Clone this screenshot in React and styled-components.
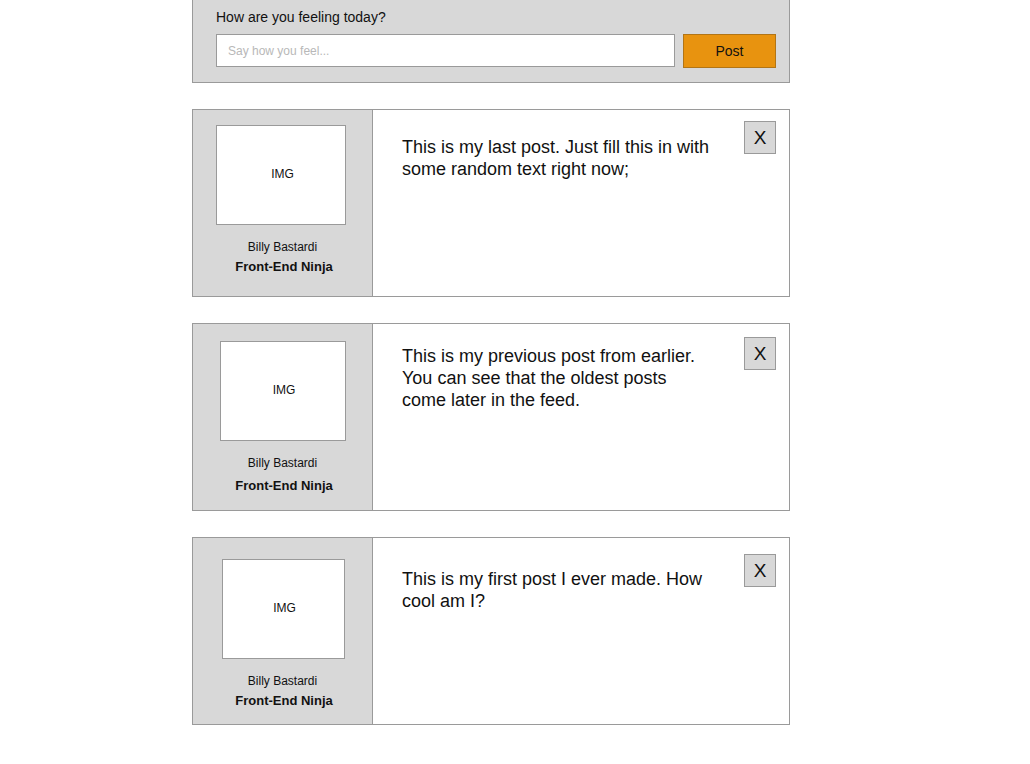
import React from 'react';
import styled, { createGlobalStyle } from 'styled-components';

const GlobalStyle = createGlobalStyle`
    body {
        margin: 0;
        background: #fff;
        font-family: "Liberation Sans", Arial, sans-serif;
        color: #111;
    }
`

const Page = styled.div`
    width: 598px;
    margin-left: 192px;
    display: flex;
    flex-direction: column;
    gap: 26px;
    padding-bottom: 40px;
`
const Composer = styled.div`
    background: #d8d8d8;
    border: 1px solid #9a9a9a;
    border-top: none;
    padding: 9px 13px 14px 23px;
`
const Prompt = styled.div`
    font-size: 14px;
    line-height: 16px;
    margin-bottom: 9px;
`
const ComposerRow = styled.div`
    display: flex;
    gap: 8px;
`
const Input = styled.input`
    flex: 1;
    height: 33px;
    box-sizing: border-box;
    border: 1px solid #9a9a9a;
    padding: 0 11px;
    font-family: inherit;
    font-size: 12px;
    outline: none;
    &::placeholder {
        color: #b8b8b8;
    }
`
const PostButton = styled.button`
    width: 93px;
    height: 34px;
    background: #e8930f;
    border: 1px solid #b27516;
    font-family: inherit;
    font-size: 14px;
    color: #111;
    padding: 0;
`
const Card = styled.div`
    display: flex;
    height: 188px;
    box-sizing: border-box;
    border: 1px solid #9a9a9a;
`
const Author = styled.div`
    width: 180px;
    box-sizing: border-box;
    background: #d8d8d8;
    border-right: 1px solid #9a9a9a;
    display: flex;
    flex-direction: column;
    align-items: center;
    padding-top: ${p => p.$top}px;
`
const Avatar = styled.div`
    width: ${p => p.$w}px;
    height: 100px;
    box-sizing: border-box;
    background: #fff;
    border: 1px solid #9a9a9a;
    display: flex;
    align-items: center;
    justify-content: center;
    padding: 0 0 2px 3px;
    font-size: 12px;
    margin-right: ${p => p.$shift}px;
`
const Name = styled.div`
    font-size: 12px;
    margin-top: 15px;
`
const Title = styled.div`
    font-size: 13px;
    font-weight: bold;
    margin-top: ${p => p.$gap}px;
    margin-left: 3px;
`
const Body = styled.div`
    flex: 1;
    display: flex;
    justify-content: space-between;
    align-items: flex-start;
    padding: 0 13px 0 29px;
`
const Text = styled.p`
    width: 310px;
    margin: ${p => p.$top}px 0 0;
    font-size: 18px;
    line-height: 22px;
`
const CloseButton = styled.button`
    width: 32px;
    height: 33px;
    margin-top: ${p => p.$top}px;
    background: #d8d8d8;
    border: 1px solid #9a9a9a;
    font-family: inherit;
    font-size: 19px;
    color: #111;
    padding: 0;
`

const posts = [
    { id: 3, text: 'This is my last post. Just fill this in with some random text right now;', top: 15, img: 130, shift: 3, gap: 5, textTop: 26, closeTop: 11 },
    { id: 2, text: 'This is my previous post from earlier. You can see that the oldest posts come later in the feed.', top: 17, img: 126, shift: 0, gap: 8, textTop: 21, closeTop: 13 },
    { id: 1, text: 'This is my first post I ever made. How cool am I?', top: 21, img: 123, shift: -1, gap: 5, textTop: 30, closeTop: 16 },
]

const App = () => (
    <Page>
        <GlobalStyle />
        <Composer>
            <Prompt>How are you feeling today?</Prompt>
            <ComposerRow>
                <Input placeholder="Say how you feel..." />
                <PostButton>Post</PostButton>
            </ComposerRow>
        </Composer>
        {posts.map(post => (
            <Card key={post.id}>
                <Author $top={post.top}>
                    <Avatar $w={post.img} $shift={post.shift}>IMG</Avatar>
                    <Name>Billy Bastardi</Name>
                    <Title $gap={post.gap}>Front-End Ninja</Title>
                </Author>
                <Body>
                    <Text $top={post.textTop}>{post.text}</Text>
                    <CloseButton $top={post.closeTop}>X</CloseButton>
                </Body>
            </Card>
        ))}
    </Page>
);

export default App;
